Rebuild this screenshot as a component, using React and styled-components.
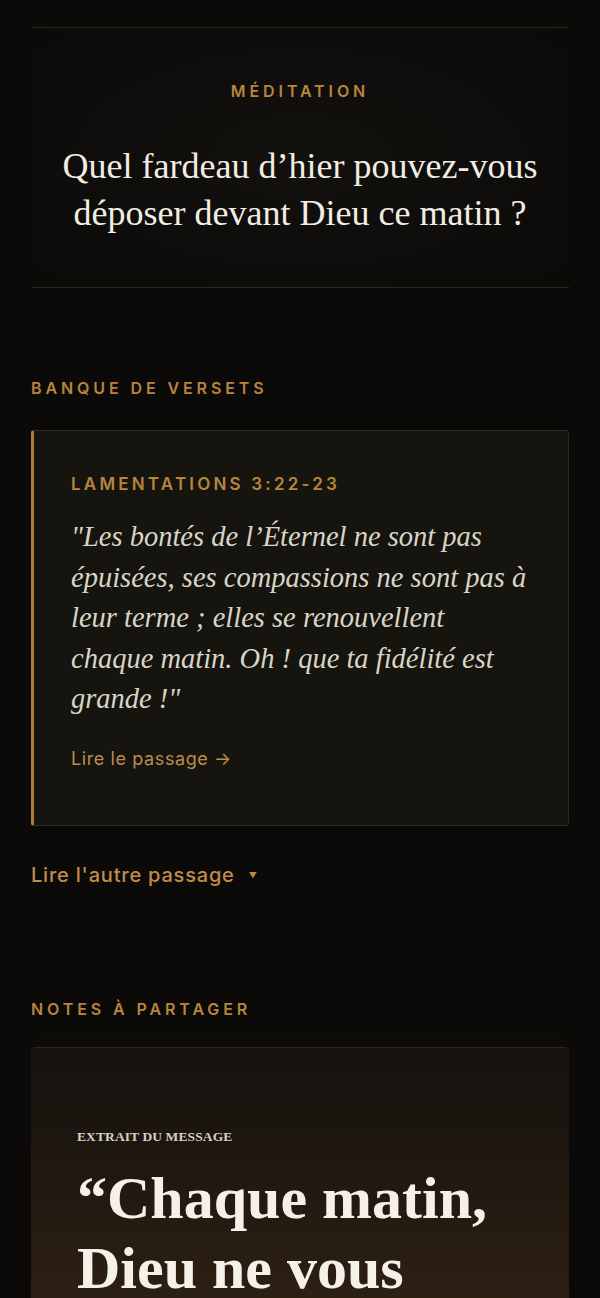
import React from 'react';
import styled, { createGlobalStyle } from 'styled-components';

const GlobalStyle = createGlobalStyle`
  html, body {
    margin: 0;
    padding: 0;
    background: #0b0a08;
  }
  body {
    font-family: Inter, "Noto Sans", sans-serif;
    color: #e9e4d8;
    -webkit-font-smoothing: antialiased;
  }
`;

const Page = styled.main`
  width: 538px;
  margin: 0 auto;
  padding-top: 27px;
  height: 1298px;
  overflow: hidden;
  box-sizing: border-box;
`;

const Meditation = styled.section`
  border-top: 1px solid #2c2818;
  border-bottom: 1px solid #2c2818;
  background: radial-gradient(ellipse at center, #12110e 0%, #0e0d0b 60%, #0b0a08 100%);
  padding: 55px 0 50px;
  text-align: center;
`;

const Eyebrow = styled.div`
  font-family: Inter, sans-serif;
  font-weight: 600;
  font-size: ${p => p.size || 15}px;
  letter-spacing: ${p => p.spacing || 3.2}px;
  text-transform: uppercase;
  color: #b8853c;
  line-height: 1;
`;

const Question = styled.h2`
  margin: 44px 0 0;
  font-family: "Liberation Serif", "DejaVu Serif", serif;
  font-weight: 400;
  font-size: 36px;
  line-height: 47px;
  color: #f2ede2;
`;

const Section = styled.section`
  margin-top: ${p => p.top}px;
`;

const VerseCard = styled.article`
  margin-top: 34px;
  background: #15140f;
  border: 1px solid #2a2924;
  border-left: 3px solid #b57c38;
  border-radius: 3px;
  padding: 45px 36px 56px 37px;
`;

const Quote = styled.blockquote`
  margin: 24px 0 0;
  font-family: "Liberation Serif", "DejaVu Serif", serif;
  font-style: italic;
  font-size: 28.5px;
  line-height: 40.5px;
  color: #d9d4c6;
`;

const PassageLink = styled.a`
  display: inline-block;
  margin-top: 28px;
  font-size: 18px;
  letter-spacing: 0.6px;
  color: #bb8c4d;
  text-decoration: none;
`;

const Toggle = styled.button`
  margin-top: 37px;
  padding: 0;
  background: none;
  border: none;
  display: flex;
  align-items: center;
  gap: 14px;
  font-family: Inter, sans-serif;
  font-size: 20px;
  letter-spacing: 0.8px;
  font-weight: 500;
  color: #c08d48;
  cursor: pointer;
`;

const Caret = styled.span`
  font-size: 8px;
  color: #c08d48;
`;

const NoteCard = styled.article`
  margin: 30px -1px 0;
  border: 1px solid #2a2520;
  border-radius: 6px;
  background: linear-gradient(180deg, #15120e 0%, #1f1710 30%, #3a2816 100%);
  padding: 81px 46px 0 46px;
  height: 300px;
  box-shadow: 0 0 40px rgba(40, 30, 15, 0.35);
`;

const NoteLabel = styled.div`
  font-family: "Liberation Serif", "DejaVu Serif", serif;
  font-weight: 700;
  font-size: 13.5px;
  color: #d9d0c2;
  letter-spacing: 0.1px;
`;

const NoteQuote = styled.p`
  margin: 18px 0 0;
  font-family: "Liberation Serif", "DejaVu Serif", serif;
  font-weight: 700;
  font-size: 60px;
  line-height: 70px;
  color: #f6f1e8;
`;

export default function App() {
  return (
    <>
      <GlobalStyle />
      <Page>
        <Meditation>
          <Eyebrow size={16} spacing={3.9}>Méditation</Eyebrow>
          <Question>
            Quel fardeau d’hier pouvez-vous
            <br />
            déposer devant Dieu ce matin ?
          </Question>
        </Meditation>

        <Section top={92}>
          <Eyebrow size={16} spacing={3.9}>Banque de versets</Eyebrow>
          <VerseCard>
            <Eyebrow size={17} spacing={3.2}>Lamentations 3:22-23</Eyebrow>
            <Quote>
              "Les bontés de l’Éternel ne sont pas épuisées, ses compassions ne sont pas à leur terme ; elles se renouvellent chaque matin. Oh ! que ta fidélité est grande !"
            </Quote>
            <PassageLink href="#">Lire le passage →</PassageLink>
          </VerseCard>
          <Toggle>
            Lire l'autre passage <Caret>▼</Caret>
          </Toggle>
        </Section>

        <Section top={114}>
          <Eyebrow size={16} spacing={3.9}>Notes à partager</Eyebrow>
          <NoteCard>
            <NoteLabel>EXTRAIT DU MESSAGE</NoteLabel>
            <NoteQuote>“Chaque matin, Dieu ne vous</NoteQuote>
          </NoteCard>
        </Section>
      </Page>
    </>
  );
}
